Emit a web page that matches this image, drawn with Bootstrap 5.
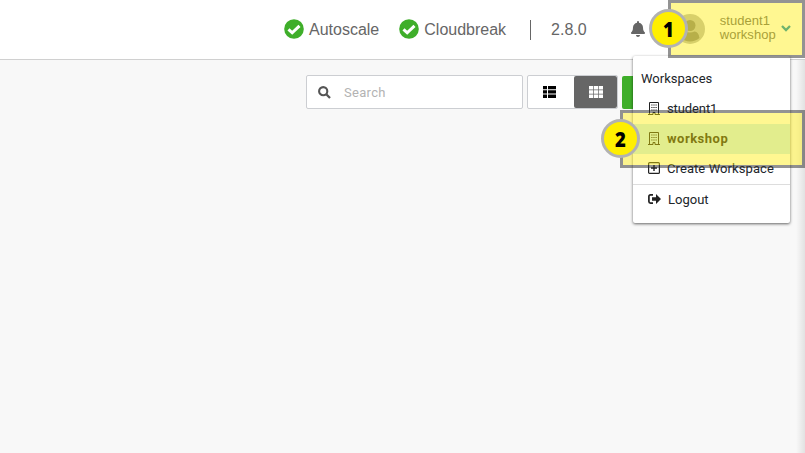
<!DOCTYPE html>
<html lang="en">
<head>
<meta charset="utf-8">
<meta name="viewport" content="width=device-width, initial-scale=1">
<title>Cloudbreak</title>
<link href="https://cdn.jsdelivr.net/npm/bootstrap@5.3.0/dist/css/bootstrap.min.css" rel="stylesheet">
<style>
body{background:#f8f8f8;font-family:"Liberation Sans",Arial,sans-serif;color:#666;height:453px;overflow:hidden;position:relative}
svg{display:block;flex:none}
.topbar{height:60px;background:#fff;border-bottom:1px solid #d0d0d0;padding-left:284px;font-size:16px;line-height:20px}
.svc{gap:5px}
.sep{width:1px;height:20px;background:#666;margin-left:24px;margin-right:20px}
.who{font-size:13px;line-height:14px;letter-spacing:.05px;margin:0 0 4px 15px;width:56px;white-space:nowrap}
.tools{padding:15px 0 0 306px;gap:4px}
.search{width:217px;height:34px;background:#fff;border:1px solid #ccced2;border-radius:2px;padding-left:11px;gap:13px;font:13px/16px Roboto,sans-serif;letter-spacing:.3px;color:#b3b3b3}
.search span{padding-top:1px}
.views{width:91px;height:34px;background:#fff;border:1px solid #ccced2;border-radius:2px}
.views .v1{width:46px;padding-right:4px;color:#000}
.views .v2{width:43px;background:#666;color:#fff;border-radius:2px}
.create{width:60px;height:33px;background:#3fae2a;border-radius:2px;margin-top:1px}
.edge{position:absolute;right:0;top:60px;bottom:0;width:9px;background:linear-gradient(90deg,rgba(0,0,0,0),rgba(0,0,0,.09))}
.usermenu{position:absolute;left:633px;top:56px;width:157px;height:167px;background:#fff;border-radius:2px;box-shadow:0 1px 3px rgba(0,0,0,.6);padding-top:8px;font:13px/30px Roboto,sans-serif;color:#212529;white-space:nowrap}
.usermenu .head{padding-left:8px}
.usermenu .item{height:30px;padding-left:15px}
.usermenu .item svg{position:relative;top:-1px}
.usermenu .item span{margin-left:7px;letter-spacing:.08px}
.usermenu .item .nm{letter-spacing:-.1px}
.usermenu .current{background:#cceef8;color:#222}
.usermenu .current span{font-weight:700;letter-spacing:.5px}
.usermenu .out{border-top:1px solid #ddd;height:31px}
.usermenu .out span{letter-spacing:0}
.hl{position:absolute;height:58px;border:3px solid rgba(48,48,48,.52);background:rgba(255,236,0,.43);background-clip:padding-box}
.hl1{left:668px;top:0;width:137px}
.hl2{left:620px;top:110px;width:185px}
.step{position:absolute;width:39px;height:39px;border:3px solid #b2b2b2;border-radius:50%;background:#ffef00;color:#000;font:800 21px/34px "Open Sans",sans-serif;text-align:center}
.step span{display:block;transform:scaleX(.88)}
.step1{left:649px;top:9px}
.step2{left:601px;top:119px}
</style>
</head>
<body>
<header class="topbar d-flex align-items-center">
  <div class="svc d-flex align-items-center">
    <svg width="20" height="20" viewBox="0 0 20 20" style="margin-top:-2px"><circle cx="10" cy="10" r="9.800" fill="#3fae2a"/><path d="M4.500 10.300l3.700 3.500L15.500 6.800" fill="none" stroke="#fff" stroke-width="3"/></svg>
    <span>Autoscale</span>
  </div>
  <div class="svc d-flex align-items-center" style="margin-left:20px">
    <svg width="20" height="20" viewBox="0 0 20 20" style="margin-top:-2px"><circle cx="10" cy="10" r="9.800" fill="#3fae2a"/><path d="M4.500 10.300l3.700 3.500L15.500 6.800" fill="none" stroke="#fff" stroke-width="3"/></svg>
    <span>Cloudbreak</span>
  </div>
  <div class="sep"></div>
  <span>2.8.0</span>
  <svg width="14" height="16" viewBox="0 0 448 512" style="margin-left:44px;margin-top:-2px"><path fill="#666" d="M224 512c35 0 64-29 64-64H160c0 35 29 64 64 64zm215-150c-19-21-55-52-55-154 0-78-54-140-128-155V32a32 32 0 0 0-64 0v21C119 68 64 130 64 208c0 102-36 133-55 154-6 6-9 14-9 22 0 16 13 32 32 32h384c19 0 32-16 32-32 0-8-3-16-9-22z"/></svg>
  <svg width="30" height="30" viewBox="0 0 30 30" style="margin-left:30px;margin-top:-2px"><circle cx="15" cy="15" r="15" fill="#bbb"/><circle cx="15" cy="11.500" r="5.500" fill="#808080"/><path d="M5.500 24q1-6.500 5-6.500 4.500 2 9 0 4 0 5 6.500a15 15 0 0 1-19 0z" fill="#808080"/></svg>
  <div class="who">student1<br>workshop</div>
  <svg width="10" height="7" viewBox="0 0 10 7" style="margin-left:5px;margin-top:-2px"><path d="M1 1l4 4 4-4" fill="none" stroke="#0088c0" stroke-width="2.300"/></svg>
</header>
<main class="tools d-flex">
  <div class="search d-flex align-items-center">
    <svg width="13" height="13" viewBox="0 0 13 13"><circle cx="5.200" cy="5.200" r="4.100" fill="none" stroke="#555" stroke-width="2.100"/><path d="M8.300 8.300l3.700 3.700" stroke="#555" stroke-width="2.300"/></svg>
    <span>Search</span>
  </div>
  <div class="views d-flex">
    <div class="v1 d-flex align-items-center justify-content-center"><svg width="13" height="12" fill="currentColor"><path d="M0 0h4v3.300H0zM5 0h8v3.300H5zM0 4.300h4v3.300H0zM5 4.300h8v3.300H5zM0 8.600h4V12H0zM5 8.600h8V12H5z"/></svg></div>
    <div class="v2 d-flex align-items-center justify-content-center"><svg width="14" height="12" fill="currentColor"><path d="M0 0h4.200v3.500H0zM4.900 0h4.200v3.500H4.900zM9.800 0H14v3.500H9.800zM0 4.200h4.200v3.500H0zM4.900 4.200h4.200v3.500H4.900zM9.800 4.200H14v3.500H9.800zM0 8.400h4.200V12H0zM4.900 8.400h4.200V12H4.900zM9.800 8.400H14V12H9.800z"/></svg></div>
  </div>
  <div class="create"></div>
</main>
<div class="edge"></div>
<nav class="usermenu">
  <div class="head">Workspaces</div>
  <div class="item d-flex align-items-center"><svg width="12" height="13" viewBox="0 0 12 13"><path d="M1.500 12.500V.5h9v12M0 12.500h5v-2h2v2H12" fill="none" stroke="#222" stroke-width="1"/><path d="M3.300 3h1.200M5.400 3h1.200M7.500 3h1.200M3.300 5.500h1.200M5.400 5.500h1.200M7.500 5.500h1.200M3.300 8h1.200M5.400 8h1.200M7.500 8h1.200" stroke="#222" stroke-width="1.200"/></svg><span class="nm">student1</span></div>
  <div class="item current d-flex align-items-center"><svg width="12" height="13" viewBox="0 0 12 13"><path d="M1.500 12.500V.5h9v12M0 12.500h5v-2h2v2H12" fill="none" stroke="#222" stroke-width="1"/><path d="M3.300 3h1.200M5.400 3h1.200M7.500 3h1.200M3.300 5.500h1.200M5.400 5.500h1.200M7.500 5.500h1.200M3.300 8h1.200M5.400 8h1.200M7.500 8h1.200" stroke="#222" stroke-width="1.200"/></svg><span>workshop</span></div>
  <div class="item d-flex align-items-center"><svg width="12" height="12" viewBox="0 0 12 12"><rect x=".6" y=".6" width="10.800" height="10.800" rx="1" fill="none" stroke="#222" stroke-width="1.200"/><path d="M6 3v6M3 6h6" stroke="#222" stroke-width="1.400"/></svg><span>Create Workspace</span></div>
  <div class="item out d-flex align-items-center"><svg width="13" height="10" viewBox="0 0 13 10"><path d="M5 .9H2.500Q.9.900.9 2.500v5Q.9 9.100 2.500 9.100H5" fill="none" stroke="#222" stroke-width="1.700"/><path d="M4 3.200h4V0l5 5-5 5V6.800H4z" fill="#222"/></svg><span>Logout</span></div>
</nav>
<div class="hl hl1"></div>
<div class="hl hl2"></div>
<div class="step step1"><span>1</span></div>
<div class="step step2"><span>2</span></div>
<script src="https://cdn.jsdelivr.net/npm/bootstrap@5.3.0/dist/js/bootstrap.bundle.min.js"></script>
</body>
</html>
